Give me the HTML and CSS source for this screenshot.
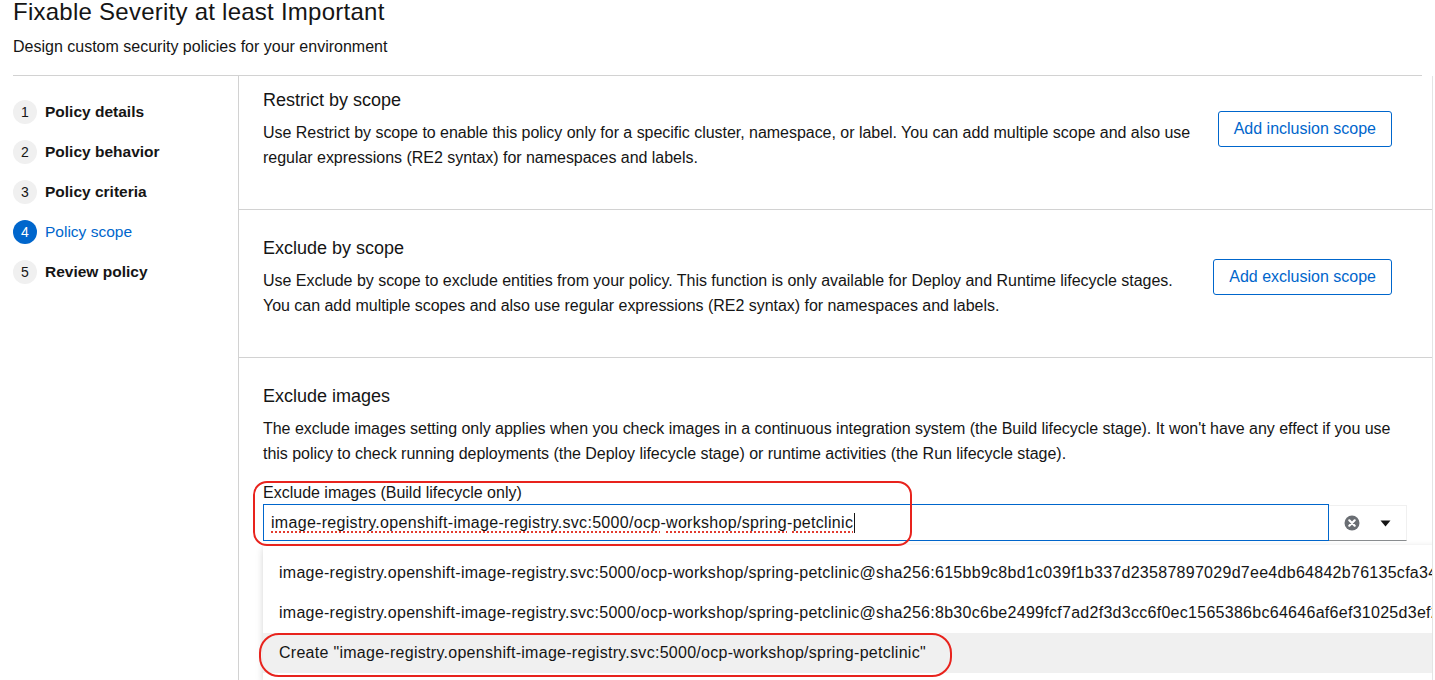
FILE: index.html
```html
<!DOCTYPE html>
<html lang="en">
<head>
<meta charset="utf-8">
<title>Fixable Severity at least Important</title>
<link rel="stylesheet" href="styles.css">
</head>
<body>
<div class="page">
  <header class="header">
    <h1 class="title">Fixable Severity at least Important</h1>
    <p class="subtitle">Design custom security policies for your environment</p>
  </header>
  <div class="layout">
    <nav class="wizard-nav">
      <ol class="steps">
        <li class="step"><span class="num">1</span><span class="step-label">Policy details</span></li>
        <li class="step"><span class="num">2</span><span class="step-label">Policy behavior</span></li>
        <li class="step"><span class="num">3</span><span class="step-label">Policy criteria</span></li>
        <li class="step active"><span class="num">4</span><span class="step-label">Policy scope</span></li>
        <li class="step"><span class="num">5</span><span class="step-label">Review policy</span></li>
      </ol>
    </nav>
    <main class="panel">
      <section class="section section-first">
        <div class="section-text">
          <h2 class="section-title">Restrict by scope</h2>
          <p class="section-desc">Use Restrict by scope to enable this policy only for a specific cluster, namespace, or label. You can add multiple scope and also use<br>regular expressions (RE2 syntax) for namespaces and labels.</p>
        </div>
        <button class="btn-secondary" type="button">Add inclusion scope</button>
      </section>
      <section class="section">
        <div class="section-text">
          <h2 class="section-title">Exclude by scope</h2>
          <p class="section-desc">Use Exclude by scope to exclude entities from your policy. This function is only available for Deploy and Runtime lifecycle stages.<br>You can add multiple scopes and also use regular expressions (RE2 syntax) for namespaces and labels.</p>
        </div>
        <button class="btn-secondary" type="button">Add exclusion scope</button>
      </section>
      <section class="section section-images">
        <h2 class="section-title">Exclude images</h2>
        <p class="section-desc">The exclude images setting only applies when you check images in a continuous integration system (the Build lifecycle stage). It won't have any effect if you use<br>this policy to check running deployments (the Deploy lifecycle stage) or runtime activities (the Run lifecycle stage).</p>
        <div class="field">
          <label class="field-label">Exclude images (Build lifecycle only)</label>
          <div class="typeahead">
            <div class="typeahead-input"><span class="spell">image-registry.openshift-image-registry.svc:5000/ocp</span>-<span class="spell">workshop/spring</span>-<span class="spell">petclinic</span><span class="text-caret"></span></div>
            <div class="typeahead-toggle">
              <svg class="clear-icon" width="16" height="16" viewBox="0 0 16 16" aria-hidden="true"><circle cx="8" cy="8" r="7.5" fill="#6a6e73"/><path d="M5.3 5.3 L10.7 10.7 M10.7 5.3 L5.3 10.7" stroke="#fff" stroke-width="2.2" stroke-linecap="round"/></svg>
              <svg class="caret-icon" width="11" height="7" viewBox="0 0 11 7" aria-hidden="true"><path d="M0.5 0.5 H10.5 L5.5 6.5 Z" fill="#151515"/></svg>
            </div>
          </div>
          <ul class="menu">
            <li class="menu-item">image-registry.openshift-image-registry.svc:5000/ocp-workshop/spring-petclinic@sha256:615bb9c8bd1c039f1b337d23587897029d7ee4db64842b76135cfa343b8e9ce1</li>
            <li class="menu-item">image-registry.openshift-image-registry.svc:5000/ocp-workshop/spring-petclinic@sha256:8b30c6be2499fcf7ad2f3d3cc6f0ec1565386bc64646af6ef31025d3ef2a7c1a</li>
            <li class="menu-item hovered">Create "image-registry.openshift-image-registry.svc:5000/ocp-workshop/spring-petclinic"</li>
          </ul>
          <div class="annot annot-field"></div>
          <div class="annot annot-create"></div>
        </div>
      </section>
    </main>
  </div>
</div>
</body>
</html>
```

FILE: styles.css
```css
* { box-sizing: border-box; }

html, body {
  margin: 0;
  padding: 0;
  height: 680px;
  overflow: hidden;
  background: #ffffff;
}

body {
  font-family: "Liberation Sans", Arial, sans-serif;
  color: #151515;
  font-size: 16px;
}

.page {
  padding-left: 13px;
  width: 1435px;
}

.header {
  width: 1409px;
  border-bottom: 1px solid #d2d2d2;
  padding-bottom: 16px;
}

.title {
  margin: -4px 0 0 0;
  font-size: 24px;
  letter-spacing: 0.25px;
  font-weight: 400;
  line-height: 31px;
}

.subtitle {
  margin: 8px 0 0 0;
  font-size: 16px;
  line-height: 24px;
}

.layout {
  display: flex;
  align-items: stretch;
  height: 620px;
}

.wizard-nav {
  width: 225px;
  flex-shrink: 0;
  padding-top: 24px;
}

.steps {
  list-style: none;
  margin: 0;
  padding: 0;
  display: flex;
  flex-direction: column;
  gap: 16px;
}

.step {
  display: flex;
  align-items: center;
  height: 24px;
}

.num {
  width: 24px;
  height: 24px;
  border-radius: 50%;
  background: #f0f0f0;
  color: #151515;
  font-size: 14px;
  display: flex;
  align-items: center;
  justify-content: center;
  flex-shrink: 0;
}

.step-label {
  margin-left: 8px;
  font-size: 15.5px;
  font-weight: 700;
  line-height: 24px;
}

.step.active .num {
  background: #0066cc;
  color: #ffffff;
}

.step.active .step-label {
  color: #0066cc;
  font-weight: 400;
}

.panel {
  width: 1195px;
  border-left: 1px solid #d2d2d2;
  border-right: 1px solid #e4e4e4;
  overflow: hidden;
  position: relative;
}

.section {
  display: flex;
  align-items: center;
  padding: 25px 40px 39px 24px;
  border-bottom: 1px solid #d2d2d2;
}

.section-first {
  padding-top: 11px;
}

.section-text {
  flex: 1;
  min-width: 0;
}

.section-title {
  margin: 0 0 6px 0;
  font-size: 18px;
  font-weight: 400;
  line-height: 27px;
}

.section-desc {
  margin: 0;
  font-size: 16px;
  line-height: 25px;
  white-space: nowrap;
  letter-spacing: -0.03px;
}

.btn-secondary {
  flex-shrink: 0;
  margin-left: 24px;
  height: 36px;
  padding: 0 15px;
  border: 1px solid #0066cc;
  border-radius: 3px;
  background: #ffffff;
  color: #0066cc;
  font-family: "Liberation Sans", Arial, sans-serif;
  font-size: 16px;
  line-height: 24px;
}

.section-images {
  display: block;
  border-bottom: none;
  padding-bottom: 0;
}

.field {
  position: relative;
  margin-top: 16px;
}

.field-label {
  display: block;
  font-size: 16px;
  line-height: 22px;
}

.typeahead {
  display: flex;
  width: 1144px;
  height: 37px;
}

.typeahead-input {
  width: 1066px;
  height: 37px;
  border: 1px solid #0066cc;
  padding: 0 7px;
  display: flex;
  align-items: center;
  font-size: 16px;
  letter-spacing: 0.3px;
  white-space: nowrap;
}

.spell {
  text-decoration: underline dotted #e23b2e;
  text-decoration-thickness: 1.5px;
  text-underline-offset: 4px;
}

.text-caret {
  display: inline-block;
  width: 1px;
  height: 20px;
  background: #151515;
  margin-left: 1px;
}

.typeahead-toggle {
  width: 78px;
  height: 36px;
  margin-top: 1px;
  border-top: 1px solid #f0f0f0;
  border-right: 1px solid #f0f0f0;
  border-bottom: 1px solid #8a8d90;
  display: flex;
  align-items: center;
  padding-left: 15px;
  gap: 20px;
}

.clear-icon { display: block; }
.caret-icon { display: block; }

.menu {
  position: absolute;
  left: 0;
  top: 63px;
  width: 1300px;
  margin: 0;
  padding: 8px 0;
  list-style: none;
  background: #ffffff;
  box-shadow: 0 4px 8px rgba(3, 3, 3, 0.12), 0 0 6px rgba(3, 3, 3, 0.06);
}

.menu-item {
  padding: 8px 16px;
  line-height: 24px;
  font-size: 16px;
  letter-spacing: 0.28px;
  white-space: nowrap;
}

.menu-item.hovered {
  background: #f0f0f0;
}

.annot {
  position: absolute;
  border: 2px solid #e8231d;
  pointer-events: none;
}

.annot-field {
  left: -10px;
  top: -1px;
  width: 659px;
  height: 65px;
  border-radius: 14px;
}

.annot-create {
  left: -4px;
  top: 151px;
  width: 693px;
  height: 44px;
  border-radius: 20px;
}
```
